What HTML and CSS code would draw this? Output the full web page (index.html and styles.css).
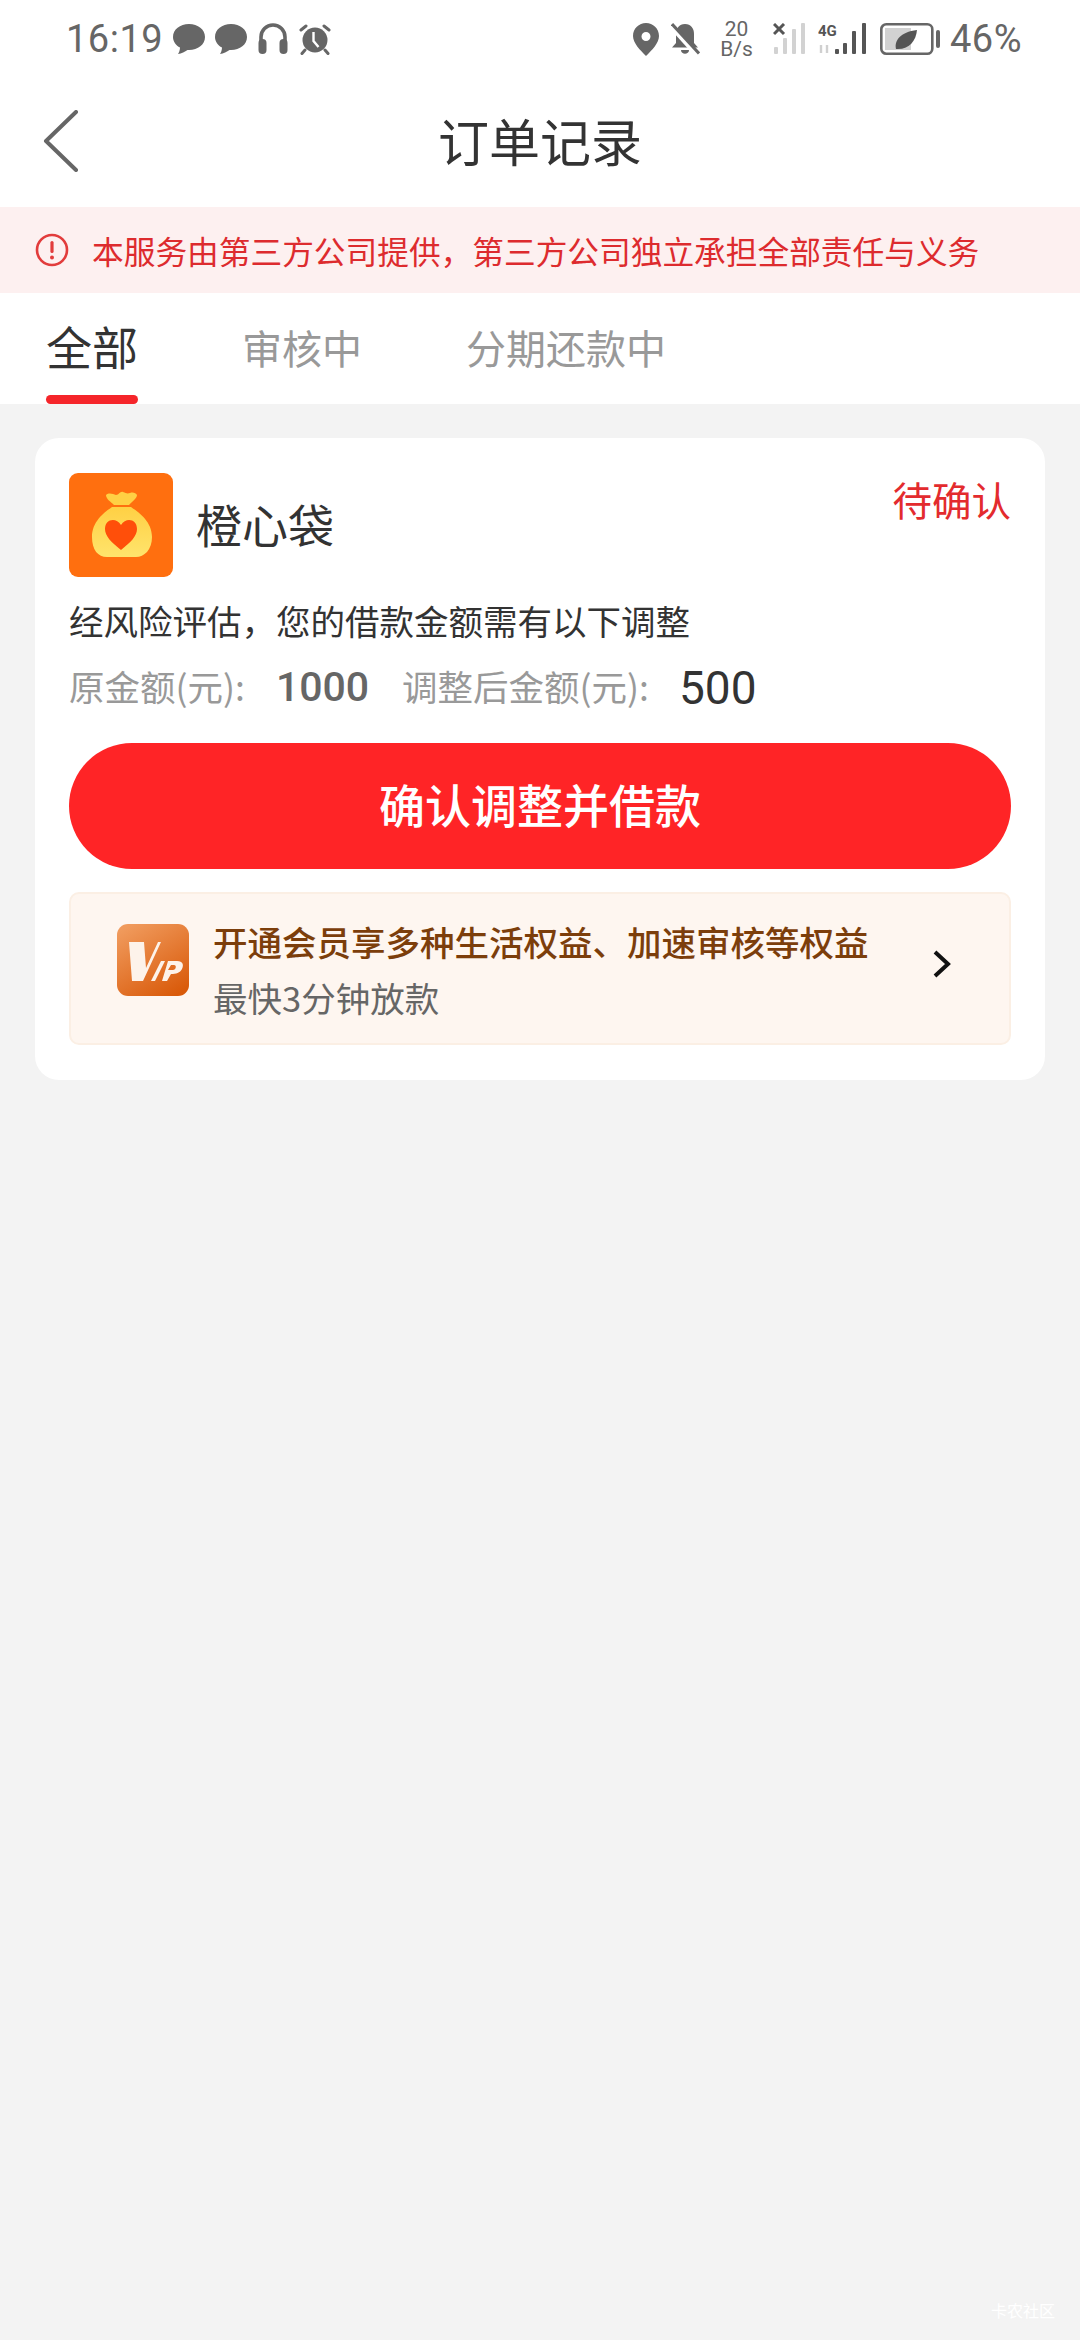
FILE: index.html
```html
<!DOCTYPE html>
<html lang="zh-CN">
<head>
<meta charset="utf-8">
<title>订单记录</title>
<link rel="stylesheet" href="styles.css">
</head>
<body>
<div class="page">
  <div class="statusbar">
    <div class="sb-left">
      <span class="time">16:19</span>
      <svg class="i32" viewBox="0 0 32 32"><path d="M16 1C7 1 0 6.500 0 14c0 4.500 3 8.500 7 10.500C7 27 6 29.500 5 31c3.500-.5 7-2.500 9.500-4.100.5 0 1 .1 1.500.1 9 0 16-5.500 16-13S25 1 16 1z" fill="#666"/></svg>
      <svg class="i32" viewBox="0 0 32 32"><path d="M16 1C7 1 0 6.500 0 14c0 4.500 3 8.500 7 10.500C7 27 6 29.500 5 31c3.500-.5 7-2.500 9.500-4.100.5 0 1 .1 1.500.1 9 0 16-5.500 16-13S25 1 16 1z" fill="#666"/></svg>
      <svg class="i32" viewBox="0 0 32 32"><path d="M4 20v-6a12 12 0 0 1 24 0v6" fill="none" stroke="#666" stroke-width="3.600"/><rect x="1.500" y="16" width="8" height="15" rx="4" fill="#666"/><rect x="22.500" y="16" width="8" height="15" rx="4" fill="#666"/></svg>
      <svg class="i32" viewBox="0 0 32 32"><circle cx="16" cy="17" r="12.500" fill="#666"/><path d="M14.500 9v9l5 6" fill="none" stroke="#fff" stroke-width="2.400"/><path d="M2 7l5-4M30 7l-5-4M6 27l-3 3.500M26 27l3 3.500" stroke="#666" stroke-width="3" stroke-linecap="round"/></svg>
    </div>
    <div class="sb-right">
      <svg class="pin" viewBox="0 0 26 33"><path fill-rule="evenodd" d="M13 0C6 0 0 5.500 0 13c0 7 7 14 13 20 6-6 13-13 13-20C26 5.500 20 0 13 0zm0 9a4.500 4.500 0 1 1 0 9 4.500 4.500 0 0 1 0-9z" fill="#666"/></svg>
      <svg class="bell" viewBox="0 0 29 33"><path d="M14 1c-6 0-9 4.500-9 10v9l-4 4.500h26L23 20v-9C23 5.500 20 1 14 1z" fill="#666"/><path d="M10 27h8c0 5-8 5-8 0z" fill="#666"/><path d="M0 3l27 30" stroke="#fff" stroke-width="5"/><path d="M1 1l27 29.500" stroke="#666" stroke-width="3"/></svg>
      <div class="speed"><span>20</span><span>B/s</span></div>
      <svg class="sig1" viewBox="0 0 33 32"><path d="M1 1l10 10M11 1L1 11" stroke="#555" stroke-width="3"/><g fill="#d2d2d2"><rect x="1" y="24" width="4" height="7" rx="1"/><rect x="10" y="15" width="4" height="16" rx="1"/><rect x="19" y="6" width="4" height="25" rx="1"/><rect x="28" y="0" width="4" height="31" rx="1"/></g></svg>
      <svg class="sig2" viewBox="0 0 49 32"><text x="0" y="13" class="sig-label">4G</text><path d="M3 22v8M9 22v8" stroke="#d0d0d0" stroke-width="2.400"/><g fill="#555"><rect x="17" y="26" width="4" height="5" rx="1"/><rect x="25" y="20" width="4" height="11" rx="1"/><rect x="34" y="8" width="4" height="23" rx="1"/><rect x="44" y="0" width="4" height="31" rx="1"/></g></svg>
      <svg class="batt" viewBox="0 0 60 32"><rect x="1.300" y="1.300" width="51" height="29.400" rx="5" fill="#fff" stroke="#666" stroke-width="2.600"/><rect x="5" y="5" width="26" height="22" fill="#d2d2d2"/><path d="M16 26c-2-8 4-17 21-19-1 11-8 20-21 19z" fill="#555"/><rect x="56" y="7" width="4" height="18" rx="2" fill="#666"/></svg>
      <span class="pct">46%</span>
    </div>
  </div>

  <header class="navbar">
    <svg class="back" viewBox="0 0 36 62"><path d="M33 2L3 31l30 29" fill="none" stroke="#666" stroke-width="4" stroke-linecap="round" stroke-linejoin="round"/></svg>
    <h1 class="title">订单记录</h1>
  </header>

  <div class="notice">
    <svg class="notice-icon" viewBox="0 0 34 34"><circle cx="17" cy="17" r="15" fill="none" stroke="#e23c3c" stroke-width="2.600"/><rect x="15.400" y="8" width="3.200" height="12" rx="1.600" fill="#e23c3c"/><circle cx="17" cy="24.500" r="2" fill="#e23c3c"/></svg>
    <span>本服务由第三方公司提供，第三方公司独立承担全部责任与义务</span>
  </div>

  <nav class="tabs">
    <div class="tab active">全部</div>
    <div class="tab">审核中</div>
    <div class="tab">分期还款中</div>
  </nav>

  <main class="content">
    <section class="card">
      <div class="card-head">
        <svg class="logo" viewBox="0 0 104 104">
          <defs><linearGradient id="bag" x1="0" y1="0" x2="0" y2="1"><stop offset="0" stop-color="#ffd044"/><stop offset="1" stop-color="#ffe46c"/></linearGradient></defs>
          <rect width="104" height="104" rx="9" fill="#ff6f0f"/>
          <path d="M37 22c3-3 7-1 10 0 3 0 4-4 7-3 3 1 4 2 7 1 3-1 6 0 7 2 0 3-5 7-8 10H45c-3-3-8-6-8-10z" fill="#ffd044"/>
          <path d="M43 34h19c7 5 21 14 21 30 0 13-8 20-16 20H38c-9 0-15-7-15-20 0-16 13-25 20-30z" fill="url(#bag)"/>
          <path d="M52 77C42 69 36 63 36 56c0-10 11-12 16-4 5-8 16-6 16 4 0 7-6 13-16 21z" fill="#ff4f0a"/>
        </svg>
        <div class="name">橙心袋</div>
        <div class="state">待确认</div>
      </div>
      <p class="desc">经风险评估，您的借款金额需有以下调整</p>
      <div class="amounts">
        <span class="a-label">原金额(元):</span>
        <span class="a-old">1000</span>
        <span class="a-label a-label2">调整后金额(元):</span>
        <span class="a-new">500</span>
      </div>
      <button class="cta">确认调整并借款</button>
      <div class="vip">
        <svg class="vip-icon" viewBox="0 0 72 72">
          <defs><linearGradient id="vg" x1="0.200" y1="0" x2="0.800" y2="1"><stop offset="0" stop-color="#f09a5c"/><stop offset="1" stop-color="#d95a0a"/></linearGradient></defs>
          <rect width="72" height="72" rx="11" fill="url(#vg)"/>
          <path d="M12 18h15l2 26 12-26h3L26 57H15z" fill="#fdf3ea"/>
          <path d="M44 37h4l-10 20h-4zM51 37h9c6 0 7 4 5 8-2 4-6 5-11 5l-4 7h-5zM54 41l-3 5h5c3 0 4-5 1-5z" fill="#fdf3ea" fill-rule="evenodd"/>
        </svg>
        <div class="vip-text">
          <div class="vip-main">开通会员享多种生活权益、加速审核等权益</div>
          <div class="vip-sub">最快3分钟放款</div>
        </div>
        <svg class="chev" viewBox="0 0 20 30"><path d="M3 3l13 12L3 27" fill="none" stroke="#111" stroke-width="4"/></svg>
      </div>
    </section>
    <div class="watermark">卡农社区</div>
  </main>
</div>
</body>
</html>
```
FILE: styles.css
```css
* { box-sizing: border-box; }
html, body { margin: 0; padding: 0; }
body {
  width: 1080px;
  height: 2340px;
  overflow: hidden;
  background: #f3f3f3;
  font-family: "Noto Sans CJK SC", "Noto Sans", sans-serif;
}
.page { display: flex; flex-direction: column; height: 2340px; }

.statusbar {
  height: 78px;
  flex: none;
  background: #fff;
  display: flex;
  justify-content: space-between;
  align-items: flex-start;
  padding: 22px 58px 0 66px;
}
.sb-left, .sb-right { display: flex; align-items: center; height: 34px; }
.time, .pct { font-family: Roboto, sans-serif; font-size: 38px; color: #666; line-height: 34px; letter-spacing: .5px; }
.i32 { width: 32px; height: 32px; margin-left: 10px; }
.pin { width: 26px; height: 33px; }
.bell { width: 29px; height: 33px; margin-left: 12px; }
.speed {
  width: 33px;
  margin-left: 20px;
  display: flex;
  flex-direction: column;
  align-items: center;
  font-family: Roboto, sans-serif;
  font-size: 21px;
  line-height: 20px;
  color: #666;
}
.sig1 { width: 33px; height: 32px; margin-left: 20px; }
.sig2 { width: 49px; height: 32px; margin-left: 12px; }
.sig-label { font-family: "Roboto", sans-serif; font-size: 15px; font-weight: 700; fill: #555; }
.batt { width: 60px; height: 32px; margin-left: 13px; }
.pct { margin-left: 10px; }

.navbar {
  height: 129px;
  flex: none;
  background: #fff;
  display: flex;
  align-items: center;
  justify-content: center;
  position: relative;
}
.back { position: absolute; left: 43px; top: 32px; width: 36px; height: 62px; }
.title { margin: 0; font-size: 51px; font-weight: 400; color: #333; line-height: 70px; position: relative; top: -3px; }

.notice {
  height: 86px;
  flex: none;
  background: #fdf0f0;
  display: flex;
  align-items: center;
  padding-left: 35px;
  gap: 23px;
  color: #dd2b2e;
  font-size: 31.700px;
}
.notice-icon { width: 34px; height: 34px; flex: none; }

.tabs {
  height: 111px;
  flex: none;
  background: #fff;
  display: flex;
  align-items: flex-start;
  padding-left: 46px;
  gap: 104px;
}
.tab { font-size: 40px; color: #999; line-height: 56px; padding-top: 26px; height: 111px; }
.tab.active {
  font-size: 46px;
  color: #333;
  line-height: 64px;
  padding-top: 20px;
  position: relative;
}
.tab.active::after {
  content: "";
  position: absolute;
  left: 0;
  right: 0;
  bottom: 0;
  height: 9px;
  border-radius: 5px;
  background: #f5252a;
}

.content { flex: 1; padding: 34px 35px 0; position: relative; }
.card {
  background: #fff;
  border-radius: 24px;
  height: 642px;
  padding: 35px 34px 0;
}
.card-head { display: flex; align-items: center; height: 104px; position: relative; }
.logo { width: 104px; height: 104px; flex: none; }
.name { font-size: 46px; color: #333; margin-left: 23px; line-height: 64px; position: relative; top: -2px; }
.state { position: absolute; right: 0; top: -2px; font-size: 39.500px; line-height: 56px; color: #e32b2e; }
.desc { margin: 18px 0 0; font-size: 34.500px; line-height: 50px; color: #333; }
.amounts { display: flex; align-items: center; height: 62px; margin-top: 9px; }
.a-label { font-size: 35.500px; color: #999; }
.a-old { font-family: Roboto, sans-serif; font-size: 41px; font-weight: 500; color: #666; margin-left: 31px; position: relative; top: 2px; }
.a-label2 { margin-left: 33px; }
.a-new { font-family: Roboto, sans-serif; font-size: 46px; color: #333; margin-left: 30px; position: relative; top: 3px; }
.cta {
  display: block;
  width: 100%;
  height: 126px;
  margin-top: 27px;
  border: 0;
  border-radius: 63px;
  background: #ff2426;
  color: #fff;
  font-family: inherit;
  font-size: 46px;
  font-weight: 500;
  padding: 0 0 6px;
}
.vip {
  height: 153px;
  margin-top: 23px;
  background: #fef6f0;
  border: 2px solid #fbefe4;
  border-radius: 10px;
  display: flex;
  align-items: center;
  padding-left: 46px;
  position: relative;
}
.vip-icon { width: 72px; height: 72px; flex: none; margin-top: -18px; }
.vip-text { margin-left: 24px; }
.vip-main { font-size: 34.500px; line-height: 50px; color: #7c3e0b; font-weight: 500; }
.vip-sub { font-size: 34.500px; line-height: 50px; color: #666; margin-top: 6px; }
.chev { position: absolute; left: 861px; top: 55px; width: 20px; height: 30px; }

.watermark {
  position: absolute;
  right: 25px;
  bottom: 20px;
  font-size: 16px;
  line-height: 20px;
  color: #fff;
}
```
